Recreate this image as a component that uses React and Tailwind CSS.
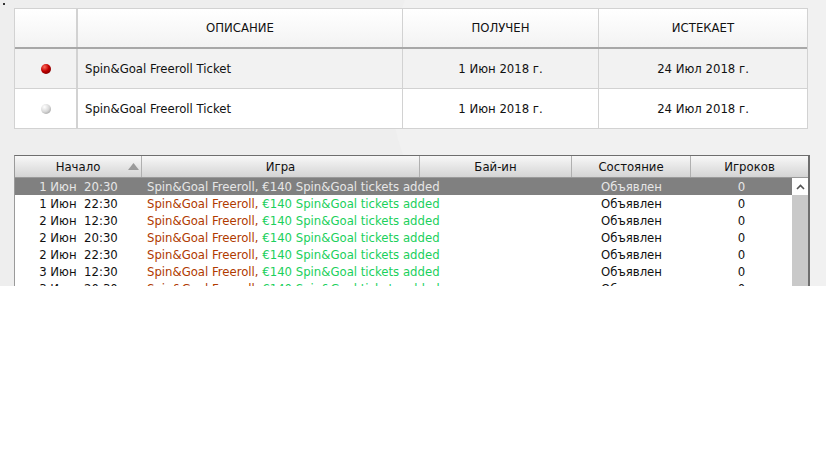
const font = { fontFamily: "'Liberation Sans Narrow', 'DejaVu Sans Condensed', 'Liberation Sans', sans-serif" };

const tickets = [
  { active: true, name: "Spin&Goal Freeroll Ticket", got: "1 Июн 2018 г.", exp: "24 Июл 2018 г." },
  { active: false, name: "Spin&Goal Freeroll Ticket", got: "1 Июн 2018 г.", exp: "24 Июл 2018 г." },
];

const games = [
  ["1 Июн", "20:30"],
  ["1 Июн", "22:30"],
  ["2 Июн", "12:30"],
  ["2 Июн", "20:30"],
  ["2 Июн", "22:30"],
  ["3 Июн", "12:30"],
  ["3 Июн", "20:30"],
];

const Dot = ({ active }) => (
  <span
    className={
      active
        ? "block w-[10px] h-[10px] rounded-full bg-[radial-gradient(circle_at_35%_30%,#ff6a5a_0%,#c00000_45%,#5a0000_100%)]"
        : "block w-[10px] h-[10px] rounded-full bg-[radial-gradient(circle_at_35%_30%,#ffffff_0%,#d8d8d8_50%,#8a8a8a_100%)]"
    }
  />
);

export default function App() {
  return (
    <div className="w-[826px] h-[460px] bg-white overflow-hidden" style={font}>
      <div className="relative h-[286px] bg-[#eeeeee] overflow-hidden">
        {/* faint swoosh in the background */}
        <div className="absolute left-[390px] top-[-140px] w-[720px] h-[440px] rounded-full bg-[#f1f1f1]" />
        <div className="absolute left-[3px] top-[3px] w-[2px] h-[2px] bg-[#333]" />

        <div className="relative pl-[14px] pt-[8px]">
          {/* tickets table */}
          <div className="w-[794px] border border-[#d2d2d2] text-[13px] text-[#111]">
            <div className="flex h-[40px] bg-gradient-to-b from-white to-[#f3f3f3] border-b-2 border-[#a8a8a8]">
              <div className="w-[63px] border-r-2 border-[#d2d2d2]" />
              <div className="w-[325px] flex items-center justify-center border-r border-[#d2d2d2]">ОПИСАНИЕ</div>
              <div className="w-[196px] flex items-center justify-center border-r border-[#d2d2d2]">ПОЛУЧЕН</div>
              <div className="flex-1 flex items-center justify-center">ИСТЕКАЕТ</div>
            </div>
            {tickets.map((t, i) => (
              <div
                key={i}
                className={
                  i === 0
                    ? "flex h-[40px] bg-[#f2f2f2] border-b border-[#d2d2d2]"
                    : "flex h-[39px] bg-white"
                }
              >
                <div className="w-[63px] flex items-center justify-center border-r-2 border-[#d2d2d2]">
                  <Dot active={t.active} />
                </div>
                <div className="w-[325px] flex items-center pl-[7px] border-r border-[#d2d2d2]">{t.name}</div>
                <div className="w-[196px] flex items-center justify-center border-r border-[#d2d2d2]">{t.got}</div>
                <div className="flex-1 flex items-center justify-center">{t.exp}</div>
              </div>
            ))}
          </div>

          {/* tournaments list */}
          <div className="mt-[26px] w-[796px] h-[140px] bg-white border-t border-l border-r-2 border-[#6e6e6e] border-l-[#9a9a9a] text-[13px]">
            <div className="flex h-[22px] bg-gradient-to-b from-[#f8f8f8] via-[#e6e6e6] to-[#d4d4d4] border-b border-[#9a9a9a] text-[#111]">
              <div className="relative w-[127px] flex items-center justify-center border-r border-[#b0b0b0]">
                Начало
                <svg className="absolute right-[2px] top-[7px]" width="11" height="7" viewBox="0 0 11 7">
                  <path d="M0 7 L5.5 0 L11 7 Z" fill="#9a9a9a" />
                </svg>
              </div>
              <div className="w-[278px] flex items-center justify-center border-r border-[#b0b0b0]">Игра</div>
              <div className="w-[152px] flex items-center justify-center border-r border-[#b0b0b0]">Бай-ин</div>
              <div className="w-[119px] flex items-center justify-center border-r border-[#b0b0b0]">Состояние</div>
              <div className="flex-1 flex items-center justify-center">Игроков</div>
            </div>
            <div className="flex">
              <div className="w-[778px]">
                {games.map(([d, t], i) => (
                  <div
                    key={i}
                    className={
                      i === 0
                        ? "flex h-[17px] items-center bg-[#808080] text-[#e6e6e6] leading-none"
                        : "flex h-[17px] items-center text-[#111] leading-none"
                    }
                  >
                    <div className="w-[127px] flex justify-center whitespace-pre">{d}  {t}</div>
                    <div className="w-[278px] pl-[5px] whitespace-nowrap">
                      <span className={i === 0 ? "" : "text-[#b03a00]"}>Spin&amp;Goal Freeroll, </span>
                      <span className={i === 0 ? "" : "text-[#1bd05c]"}>€140 Spin&amp;Goal tickets added</span>
                    </div>
                    <div className="w-[152px]" />
                    <div className="w-[119px] flex justify-center">Объявлен</div>
                    <div className="flex-1 flex justify-center">0</div>
                  </div>
                ))}
              </div>
              <div className="w-[16px] flex flex-col">
                <div className="h-[17px] flex items-center justify-center bg-white">
                  <svg width="9" height="6" viewBox="0 0 9 6">
                    <path d="M1 5 L4.5 1.5 L8 5" fill="none" stroke="#555" strokeWidth="1.6" />
                  </svg>
                </div>
                <div className="flex-1 bg-[#c9c9c9]" />
              </div>
            </div>
          </div>
        </div>
      </div>
    </div>
  );
}
